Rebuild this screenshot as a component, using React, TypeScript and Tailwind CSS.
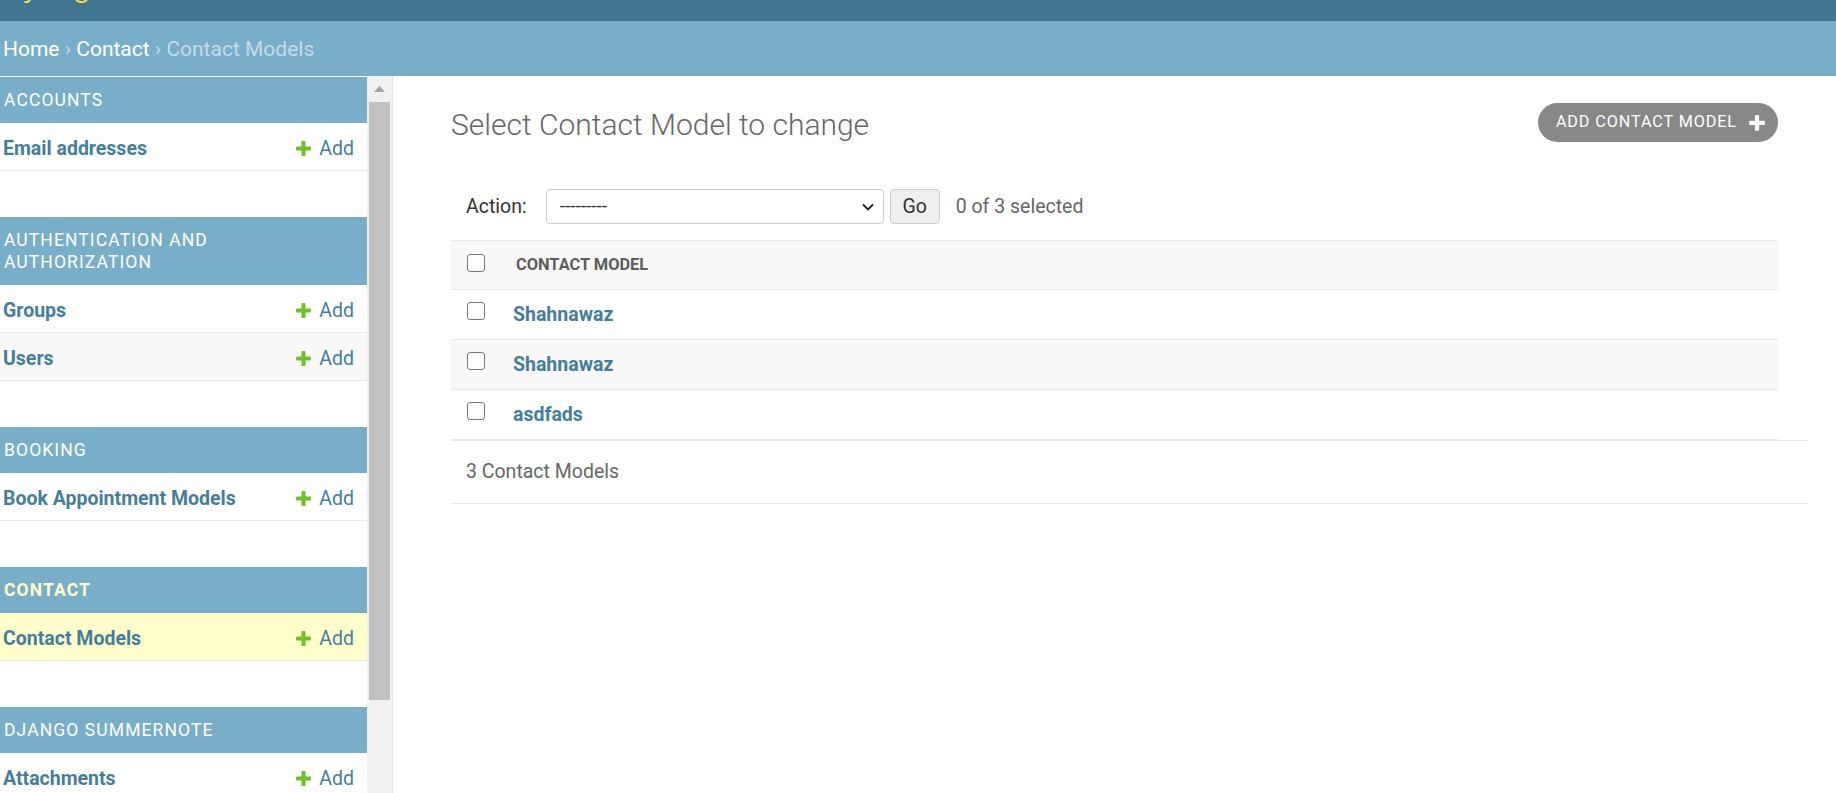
import React from "react";

const PlusIcon = ({ color, size }: { color: string; size: number }) => (
  <svg width={size} height={size} viewBox="0 0 1792 1792" className="shrink-0">
    <path
      fill={color}
      d="M1600 796v192q0 40-28 68t-68 28h-416v416q0 40-28 68t-68 28h-192q-40 0-68-28t-28-68v-416h-416q-40 0-68-28t-28-68v-192q0-40 28-68t68-28h416v-416q0-40 28-68t68-28h192q40 0 68 28t28 68v416h416q40 0 68 28t28 68z"
    />
  </svg>
);

type Mod = { title: React.ReactNode; rows: string[]; current?: boolean };

const modules: Mod[] = [
  { title: "Accounts", rows: ["Email addresses"] },
  {
    title: (
      <>
        Authentication and
        <br />
        Authorization
      </>
    ),
    rows: ["Groups", "Users"],
  },
  { title: "Booking", rows: ["Book Appointment Models"] },
  { title: "Contact", rows: ["Contact Models"], current: true },
  { title: "Django Summernote", rows: ["Attachments", "Summernote"] },
];

const Checkbox = ({ lift }: { lift: string }) => (
  <span className={`block w-[18px] h-[18px] rounded-[3px] border-[1.5px] border-[#767676] bg-white ${lift}`} />
);

export default function App() {
  return (
    <div
      className="w-[1836px] h-[793px] overflow-hidden bg-white"
      style={{ fontFamily: "Roboto, 'Liberation Sans', sans-serif" }}
    >
      {/* header (mostly scrolled out of view) */}
      <div className="h-[21px] bg-[#417690] overflow-hidden">
        <div className="ml-[3px] mt-[-33px] text-[35px] leading-[35px] font-light text-[#f5dd5d] whitespace-nowrap">
          Django administration
        </div>
      </div>

      {/* breadcrumbs */}
      <div className="h-[55px] bg-[#79aec8] flex items-center pl-[3px] pt-[2px] text-[21px] text-[#c4dce8] whitespace-nowrap">
        <span className="text-white">Home</span>
        <span>&nbsp;›&nbsp;</span>
        <span className="text-white">Contact</span>
        <span>&nbsp;›&nbsp;Contact Models</span>
      </div>

      <div className="flex h-[717px]">
        {/* sidebar */}
        <aside className="w-[367px] shrink-0 overflow-hidden pt-px">
          {modules.map((m, i) => (
            <div key={i} className="mb-[46px]">
              <div
                className={`bg-[#79aec8] pl-[4px] pr-[12px] py-[12px] text-[17.5px] leading-[22px] tracking-[1.1px] uppercase ${
                  m.current ? "text-[#ffffcc] font-bold" : "text-white"
                }`}
              >
                {m.title}
              </div>
              {m.rows.map((r, j) => (
                <div
                  key={j}
                  className={`h-[48px] border-b border-[#e8e8e8] flex items-center justify-between pl-[3px] pr-[13px] pt-[4px] text-[19.5px] ${
                    m.current ? "bg-[#ffffcc]" : j % 2 === 1 ? "bg-[#f8f8f8]" : "bg-white"
                  }`}
                >
                  <span className="font-bold text-[#447e9b]">{r}</span>
                  <span className="flex items-center text-[#447e9b]">
                    <PlusIcon color="#70bf2b" size={19} />
                    <span className="ml-[6px]">Add</span>
                  </span>
                </div>
              ))}
            </div>
          ))}
        </aside>

        {/* fake scrollbar */}
        <div className="w-[26px] shrink-0 bg-[#f1f1f1] border-r border-[#e4e4e4] flex flex-col">
          <div className="h-[26px] flex items-center justify-center">
            <svg width="11" height="6" viewBox="0 0 11 6">
              <polygon points="5.5,0 11,6 0,6" fill="#a3a3a3" />
            </svg>
          </div>
          <div className="h-[598px] mx-[2px] bg-[#c1c1c1]" />
        </div>

        {/* main content */}
        <main className="flex-1 pl-[58px] pt-[27px]">
          <div className="w-[1327px] h-[39px] flex items-center justify-between">
            <h1 className="text-[30px] font-light text-[#666] leading-[36px] mt-[4px]">
              Select Contact Model to change
            </h1>
            <a className="h-[39px] rounded-full bg-[#888] text-white flex items-center pl-[18px] pr-[11px] text-[16.2px] tracking-[0.9px] uppercase">
              Add Contact Model
              <span className="ml-[10px] flex items-center">
                <PlusIcon color="#ffffff" size={20} />
              </span>
            </a>
          </div>

          {/* actions */}
          <div className="mt-[47px] h-[35px] flex items-center pl-[15px] text-[19.5px]">
            <span className="text-[#333]">Action:</span>
            <div className="ml-[19px] w-[338px] h-[35px] border border-[#cccccc] rounded-[4px] bg-white flex items-center justify-between pl-[13px] pr-[9px]">
              <span className="text-[#333] text-[19px]">---------</span>
              <svg width="12" height="8" viewBox="0 0 12 8">
                <polyline points="1,1.5 6,6.5 11,1.5" fill="none" stroke="#222" strokeWidth="1.8" />
              </svg>
            </div>
            <button className="ml-[6px] w-[50px] h-[35px] border border-[#cccccc] rounded-[4px] bg-[#efefef] text-[#333] text-[19.5px] flex items-center justify-center">
              Go
            </button>
            <span className="ml-[16px] text-[#666]">0 of 3 selected</span>
          </div>

          {/* results table */}
          <div className="mt-[16px] w-[1327px]">
            <div className="h-[50px] border-t border-b border-[#e8e8e8] bg-[#f8f8f8] flex items-center">
              <div className="w-[50px] pl-[16px]">
                <Checkbox lift="mt-[-5px]" />
              </div>
              <span className="ml-[15px] text-[16.4px] font-bold uppercase text-[#5c5c5c]">Contact Model</span>
            </div>
            {["Shahnawaz", "Shahnawaz", "asdfads"].map((n, i) => (
              <div
                key={i}
                className={`h-[50px] border-b border-[#e8e8e8] flex items-center ${
                  i === 1 ? "bg-[#f8f8f8]" : "bg-white"
                }`}
              >
                <div className="w-[50px] pl-[16px]">
                  <Checkbox lift="mt-[-8px]" />
                </div>
                <span className="ml-[12px] text-[19.5px] font-bold text-[#447e9b]">{n}</span>
              </div>
            ))}
          </div>

          {/* paginator */}
          <div className="w-[1357px] h-[64px] border-t border-b border-[#e8e8e8] flex items-center pl-[15px] text-[19.5px] text-[#666]">
            3 Contact Models
          </div>
        </main>
      </div>
    </div>
  );
}
